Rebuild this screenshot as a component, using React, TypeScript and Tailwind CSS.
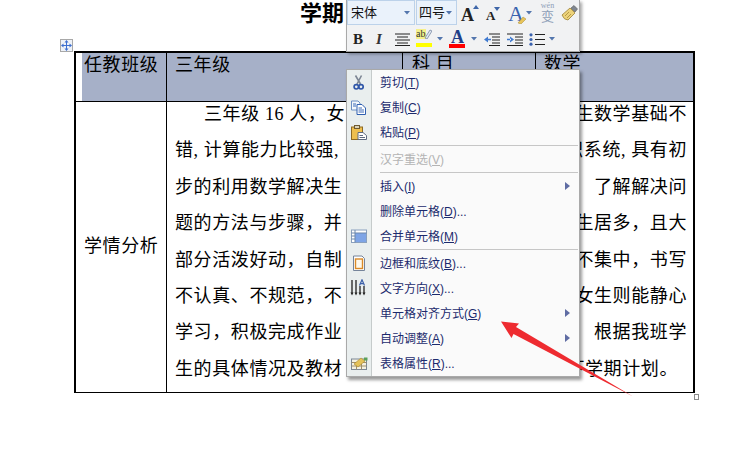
import type { ReactNode } from 'react'

const bodyLines = [
  { left: '三年级 16 人，女', right: '生数学基础不', indent: true },
  { left: '错, 计算能力比较强,', right: '识系统, 具有初' },
  { left: '步的利用数学解决生', right: '了解解决问' },
  { left: '题的方法与步骤，并', right: '生居多，且大' },
  { left: '部分活泼好动，自制', right: '不集中，书写' },
  { left: '不认真、不规范，不', right: '女生则能静心' },
  { left: '学习，积极完成作业', right: '根据我班学' },
  { left: '生的具体情况及教材', right: '下学期计划。', tail: true },
]

function Scissors() {
  return (
    <svg viewBox="0 0 20 20" className="h-5 w-5">
      <path d="M6.5 2.5 L11.5 11 M12.5 2.5 L8 11" stroke="#7d8694" strokeWidth="1.6" fill="none" />
      <circle cx="7.3" cy="13.8" r="2.2" fill="none" stroke="#2f56a8" strokeWidth="1.7" />
      <circle cx="12" cy="13.8" r="2.2" fill="none" stroke="#2f56a8" strokeWidth="1.7" />
    </svg>
  )
}

function Copy() {
  return (
    <svg viewBox="0 0 20 20" className="h-5 w-5">
      <path d="M2.5 3 H9 L11 5 V12 H2.5 Z" fill="#f4f7fb" stroke="#6d8fc4" />
      <path d="M8 6.5 H13 L16.5 10 V16.5 H8 Z" fill="#fff" stroke="#2f5fb0" />
      <path d="M9.5 10 H13 M9.5 12 H15 M9.5 14 H15 M4 6 H7 M4 8 H7" stroke="#3c6ab8" />
    </svg>
  )
}

function Paste() {
  return (
    <svg viewBox="0 0 20 20" className="h-5 w-5">
      <rect x="2.5" y="4" width="11" height="12.5" fill="#eebf4f" stroke="#8d6a25" />
      <rect x="5.5" y="2.5" width="5" height="3" fill="#d9d2b8" stroke="#6e5a30" />
      <path d="M9 9.5 H14 L17.5 12.5 V16.5 H9 Z" fill="#fff" stroke="#5e6b80" />
      <path d="M10.5 12.5 H14 M10.5 14.5 H16" stroke="#5e6b80" />
    </svg>
  )
}

function Merge() {
  return (
    <svg viewBox="0 0 20 20" className="h-5 w-5">
      <rect x="2.5" y="3" width="15" height="12.5" fill="#fff" stroke="#8aa0bd" />
      <rect x="6" y="6" width="11" height="9" fill="#7ea4e6" />
      <path d="M2.5 6 H17.5 M6 3 V15.5 M2.5 9 H6 M2.5 12 H6" stroke="#6d87ab" />
    </svg>
  )
}

function BorderPage() {
  return (
    <svg viewBox="0 0 20 20" className="h-5 w-5">
      <path d="M4.5 2 H13 L15.5 4.5 V16.5 H4.5 Z" fill="#fff" stroke="#75849a" />
      <rect x="6.5" y="5" width="7" height="9.5" fill="#fdf8ec" stroke="#d98a28" strokeWidth="1.4" />
    </svg>
  )
}

function TextDirection() {
  return (
    <svg viewBox="0 0 20 20" className="h-5 w-5">
      <path d="M3 1 V14 M7 1 V14 M11 7 V14 M15 7 V14" stroke="#222" strokeWidth="1.3" />
      <path d="M1.5 13.5 L3 16.5 L4.5 13.5 Z M5.5 13.5 L7 16.5 L8.5 13.5 Z M9.5 13.5 L11 16.5 L12.5 13.5 Z M13.5 13.5 L15 16.5 L16.5 13.5 Z" fill="#222" />
      <path d="M10.5 6.5 L13 0.8 L15.5 6.5 M11.5 4.6 H14.5" stroke="#3b5fa8" strokeWidth="1.2" fill="none" />
    </svg>
  )
}

function TableProps() {
  return (
    <svg viewBox="0 0 20 20" className="h-5 w-5">
      <rect x="2.5" y="5" width="15" height="10.5" fill="#f5f1e2" stroke="#7c8796" />
      <path d="M2.5 8.5 H17.5 M2.5 12 H17.5 M7.5 8.5 V15.5 M12.5 8.5 V15.5" stroke="#a08f6a" />
      <path d="M5 10 L12 4 L16 7 L9 13 Z" fill="#e5c25a" stroke="#a9862c" strokeWidth="0.6" />
      <path d="M15 3.5 H18.5 V6.5 H15 Z" fill="#5aa05a" />
    </svg>
  )
}

function MoveHandle() {
  return (
    <svg viewBox="0 0 11 11" className="h-[11px] w-[11px]">
      <path d="M5.5 1 V10 M1 5.5 H10" stroke="#3d6fd0" strokeWidth="1" />
      <path d="M5.5 0 L3.5 2.5 H7.5 Z M5.5 11 L3.5 8.5 H7.5 Z M0 5.5 L2.5 3.5 V7.5 Z M11 5.5 L8.5 3.5 V7.5 Z" fill="#3d6fd0" />
    </svg>
  )
}

function DropArrow({ className = '' }: { className?: string }) {
  return (
    <svg viewBox="0 0 6 4" className={`h-1 w-[6px] shrink-0 ${className}`}>
      <path d="M0 0 H6 L3 3.5 Z" fill="#5376ad" />
    </svg>
  )
}

function SubArrow() {
  return (
    <svg viewBox="0 0 5 8" className="absolute left-[218px] top-[8px] h-2 w-[5px]">
      <path d="M0 0 L5 4 L0 8 Z" fill="#5f6ca3" />
    </svg>
  )
}

function Item({ label, hot, suffix = '', icon, sub, disabled }: {
  label: string
  hot: string
  suffix?: string
  icon?: ReactNode
  sub?: boolean
  disabled?: boolean
}) {
  return (
    <div className={`relative flex h-[25px] items-center ${disabled ? 'text-[#b4b4b4]' : 'text-[#1c2a6d]'}`}>
      <div className="flex w-[25px] justify-center pr-[2px]">{icon}</div>
      <span className="ml-[8px] whitespace-nowrap">
        {label}(<span className="underline underline-offset-1">{hot}</span>){suffix}
      </span>
      {sub && <SubArrow />}
    </div>
  )
}

function Separator() {
  return <div className="ml-[33px] mr-[1px] h-[2px] border-t border-[#c6c6c6]" />
}

function Toolbar() {
  return (
    <div className="absolute left-[346px] top-0 z-10 h-[52px] w-[234px] border-x border-b border-[#a9a9a9] bg-[#f1f2f3] shadow-[2px_2px_3px_rgba(0,0,0,0.35)]">
      <div className="flex h-[25px] items-center">
        <div className="flex h-[25px] w-[68px] items-center justify-between border border-[#bcd2ea] bg-[#eaf2fb] pl-[3px] pr-[4px] text-[13px] text-[#111]">
          宋体
          <DropArrow />
        </div>
        <div className="ml-[1px] flex h-[25px] w-[41px] items-center justify-between border border-[#bcd2ea] bg-[#eaf2fb] pl-[2px] pr-[4px] text-[13px] text-[#111]">
          四号
          <DropArrow />
        </div>
        <div className="relative ml-[4px] h-[20px] w-[17px] text-[18px] font-bold leading-[24px] text-[#222]">
          A
          <svg viewBox="0 0 6 4" className="absolute right-[-1px] top-[2px] h-1 w-[6px]"><path d="M0 4 L3 0 L6 4 Z" fill="#3f66a8" /></svg>
        </div>
        <div className="relative ml-[8px] h-[20px] w-[12px] text-[13px] font-bold leading-[26px] text-[#222]">
          A
          <svg viewBox="0 0 6 4" className="absolute right-[-2px] top-[4px] h-1 w-[6px]"><path d="M0 0 H6 L3 4 Z" fill="#3f66a8" /></svg>
        </div>
        <div className="relative ml-[10px] h-[22px] w-[17px] text-[22px] leading-[24px] text-[#3a62ae]">
          A
          <svg viewBox="0 0 10 10" className="absolute bottom-0 right-[-2px] h-[10px] w-[10px]"><path d="M1 9 L6 3 L9 5 L4 10 Z" fill="#e8c45a" stroke="#a88a30" strokeWidth="0.5" /></svg>
        </div>
        <DropArrow className="ml-[1px]" />
        <div className="ml-[7px] flex w-[17px] flex-col items-center text-[#8ea0b8]">
          <span className="h-[8px] whitespace-nowrap text-[8px] leading-[8px]">wén</span>
          <span className="h-[13px] whitespace-nowrap text-[13px] leading-[13px]">变</span>
        </div>
        <svg viewBox="0 0 18 18" className="ml-[5px] h-[18px] w-[18px]">
          <path d="M1 11 L9 4 L14 9 L7 16 Q3 16 1 11 Z" fill="#ecd27a" stroke="#9c8236" strokeWidth="0.8" />
          <path d="M10 4 L13 1.5 L16.5 5 L14 8 Z" fill="#7f8791" stroke="#555" strokeWidth="0.6" />
          <path d="M4 12 L8 8 M6 14 L10 10" stroke="#b59a45" />
        </svg>
      </div>
      <div className="flex h-[26px] items-center pl-[6px] pt-[2px]">
        <span className="w-[11px] text-[15px] font-bold leading-[20px] text-[#222]">B</span>
        <span className="ml-[12px] w-[9px] text-[15px] font-bold italic leading-[20px] text-[#333]">I</span>
        <svg viewBox="0 0 15 13" className="ml-[10px] h-[13px] w-[15px]">
          <path d="M0 1 H15 M2 4 H13 M0 7 H15 M2 10 H13 M0 12.5 H15" stroke="#222" />
        </svg>
        <div className="relative ml-[6px] h-[22px] w-[16px]">
          <span className="absolute left-0 top-[1px] h-[10px] w-[10px] bg-[#f5f08a] text-[10px] leading-[10px] text-[#333]">ab</span>
          <svg viewBox="0 0 8 10" className="absolute right-0 top-[1px] h-[10px] w-2"><path d="M1 9 L6 1 L8 2 L3 10 Z" fill="#dfe7f2" stroke="#6b7d99" strokeWidth="0.7" /></svg>
          <div className="absolute bottom-[3px] left-0 h-[4px] w-[16px] bg-[#ffff00]" />
        </div>
        <DropArrow className="ml-[5px]" />
        <div className="relative ml-[6px] h-[22px] w-[17px] text-center text-[18px] font-bold leading-[18px] text-[#1f3f88]">
          A
          <div className="absolute bottom-[2px] left-0 h-[4px] w-[16px] bg-[#ff0000]" />
        </div>
        <DropArrow className="ml-[5px]" />
        <svg viewBox="0 0 16 13" className="ml-[7px] h-[13px] w-4">
          <path d="M5 1 H16 M8 4 H16 M8 7 H16 M8 10 H16 M5 12.5 H16" stroke="#222" />
          <path d="M0 6.5 L4 3.5 V9.5 Z M3 5.8 H7 V7.2 H3 Z" fill="#3f7ad0" />
        </svg>
        <svg viewBox="0 0 16 13" className="ml-[7px] h-[13px] w-4">
          <path d="M0 1 H16 M8 4 H16 M8 7 H16 M8 10 H16 M0 12.5 H16" stroke="#222" />
          <path d="M7 6.5 L3 3.5 V9.5 Z M0 5.8 H4 V7.2 H0 Z" fill="#3f7ad0" />
        </svg>
        <svg viewBox="0 0 16 13" className="ml-[6px] h-[13px] w-4">
          <path d="M6 1.5 H16 M6 6.5 H16 M6 11.5 H16" stroke="#222" />
          <circle cx="2" cy="1.8" r="1.6" fill="#3a62ae" />
          <circle cx="2" cy="6.5" r="1.6" fill="#3a62ae" />
          <circle cx="2" cy="11.2" r="1.6" fill="#3a62ae" />
        </svg>
        <DropArrow className="ml-[4px]" />
      </div>
    </div>
  )
}

function ContextMenu() {
  return (
    <div className="absolute left-[346px] top-[69px] z-10 w-[234px] border border-[#a9a9a9] bg-[#fafafa] [font-family:'Liberation_Sans','Noto_Sans_CJK_SC',sans-serif] text-[12px] shadow-[2px_3px_3px_rgba(0,0,0,0.4)]">
      <div className="absolute bottom-0 left-0 top-0 w-[25px] border-r border-[#c6cbcb] bg-[#e9eeee]" />
      <div className="relative flex flex-col">
        <Item label="剪切" hot="T" icon={<Scissors />} />
        <Item label="复制" hot="C" icon={<Copy />} />
        <Item label="粘贴" hot="P" icon={<Paste />} />
        <Separator />
        <Item label="汉字重选" hot="V" disabled />
        <Separator />
        <Item label="插入" hot="I" sub />
        <Item label="删除单元格" hot="D" suffix="..." />
        <Item label="合并单元格" hot="M" icon={<Merge />} />
        <Separator />
        <Item label="边框和底纹" hot="B" suffix="..." icon={<BorderPage />} />
        <Item label="文字方向" hot="X" suffix="..." icon={<TextDirection />} />
        <Item label="单元格对齐方式" hot="G" sub />
        <Item label="自动调整" hot="A" sub />
        <Item label="表格属性" hot="R" suffix="..." icon={<TableProps />} />
      </div>
    </div>
  )
}

export default function App() {
  return (
    <div className="relative h-[460px] w-[753px] overflow-hidden bg-white [font-family:'Liberation_Serif','Noto_Sans_CJK_SC',serif] text-black">
      <div className="h-[51px] pl-[300px] pt-[2px] text-[22px] font-bold leading-[24px]">学期</div>

      <div className="relative ml-[74px] w-[621px] border-x-2 border-t-2 border-b border-black text-[18px] tracking-[0.6px]">
        <div className="flex h-[49px] border-b border-black leading-[22px]">
          <div className="ml-[6px] w-[85px] border-r border-black bg-[#a6b0c8] pl-[2px] pt-[1px]">任教班级</div>
          <div className="w-[236px] border-r border-black bg-[#a6b0c8] pl-[8px] pt-[1px]">三年级</div>
          <div className="w-[133px] border-r border-black bg-[#a6b0c8] pl-[9px]">科 目</div>
          <div className="flex-1 bg-[#a6b0c8] pl-[8px]">数学</div>
        </div>
        <div className="flex h-[290px]">
          <div className="flex w-[91px] shrink-0 items-center border-r border-black pb-[1px] pl-[8px]">学情分析</div>
          <div className="flex flex-1 flex-col gap-[16.4px] pl-[8px] pr-[6px] pt-[2px] leading-[20px]">
            {bodyLines.map((line) => (
              <div key={line.left} className="flex h-[20px] justify-between whitespace-nowrap">
                <span className={line.indent ? 'ml-[29px]' : ''}>{line.left}</span>
                <span className={line.tail ? 'mr-[9px]' : ''}>{line.right}</span>
              </div>
            ))}
          </div>
        </div>
      </div>

      {/* table handles */}
      <div className="absolute left-[60px] top-[39px] flex h-[13px] w-[13px] items-center justify-center border border-[#a8a8a8] bg-[#eef2f8]">
        <MoveHandle />
      </div>
      <div className="absolute left-[694px] top-[394px] h-[6px] w-[5px] border border-[#8c8c8c] bg-white" />

      <Toolbar />
      <ContextMenu />

      {/* red annotation arrow */}
      <svg viewBox="0 0 753 460" className="pointer-events-none absolute inset-0 z-20 h-[460px] w-[753px]">
        <path d="M501 321.5 L519 323.5 L516 327 L633 396.5 L513.5 334 L511.5 338 Z" fill="#ee2b30" />
      </svg>
    </div>
  )
}
